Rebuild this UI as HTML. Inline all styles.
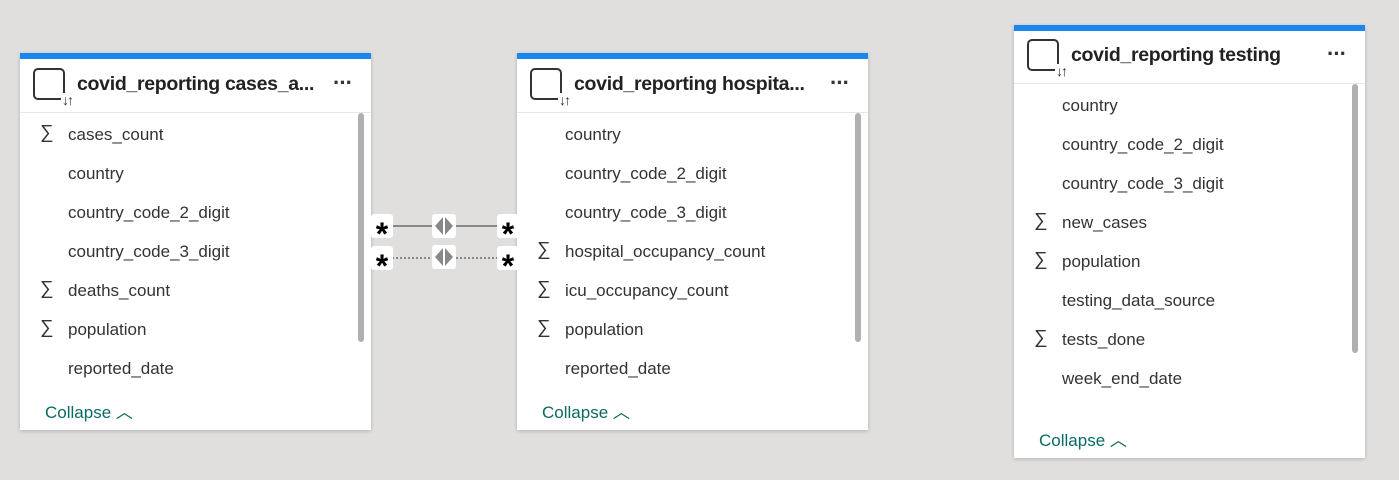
<!DOCTYPE html><html><head><style>
body{margin:0;width:1399px;height:480px;background:#e0dfdd;font-family:"Liberation Sans",sans-serif;position:relative;overflow:hidden}
.card{position:absolute;width:351px;background:#fff;border-top:6px solid #1a86f0;box-shadow:0 1px 4px rgba(0,0,0,.2)}
.hd{height:53px;border-bottom:1px solid #e6e6e6;position:relative}
.ic{position:absolute;left:13px;top:9px;width:28px;height:28px;border:2px solid #333;border-radius:5px}
.ic:after{content:"↓↑";position:absolute;right:-9px;bottom:-9px;background:#fff;font-size:14px;font-weight:bold;color:#333;line-height:14px;letter-spacing:-2px;padding-left:1px}
.tt{position:absolute;left:57px;top:14px;font-size:19.5px;font-weight:bold;color:#222;letter-spacing:-.3px}
.dots{position:absolute;right:19px;top:11px;font-size:22px;font-weight:bold;color:#333;letter-spacing:-1px}
.row{position:absolute;left:48px;font-size:17px;color:#333}
.sig{position:absolute;left:-28px;font-size:19px;top:-3px}
.col{position:absolute;left:25px;font-size:17px;color:#0b6a63}
.sb{position:absolute;right:7px;width:6px;background:#b0b0b0;border-radius:3px}
.star{position:absolute;width:22px;height:24px;background:#fff;border-radius:3px;font-size:32px;text-align:center;line-height:40px;font-weight:bold}
.dia{position:absolute;width:24px;height:24px;background:#fff;border-radius:3px}
</style></head><body>
<div class="card" style="left:20px;top:53px;height:371px">
<div class="hd"><div class="ic"></div><div class="tt">covid_reporting cases_a...</div><div class="dots">···</div></div>
<div class="sb" style="top:54px;height:229px"></div>
<div class="row" style="top:66px"><span class="sig">∑</span>cases_count</div>
<div class="row" style="top:105px">country</div>
<div class="row" style="top:144px">country_code_2_digit</div>
<div class="row" style="top:183px">country_code_3_digit</div>
<div class="row" style="top:222px"><span class="sig">∑</span>deaths_count</div>
<div class="row" style="top:261px"><span class="sig">∑</span>population</div>
<div class="row" style="top:300px">reported_date</div>
<div class="col" style="top:339px">Collapse ︿</div>
</div>
<div class="card" style="left:517px;top:53px;height:371px">
<div class="hd"><div class="ic"></div><div class="tt">covid_reporting hospita...</div><div class="dots">···</div></div>
<div class="sb" style="top:54px;height:229px"></div>
<div class="row" style="top:66px">country</div>
<div class="row" style="top:105px">country_code_2_digit</div>
<div class="row" style="top:144px">country_code_3_digit</div>
<div class="row" style="top:183px"><span class="sig">∑</span>hospital_occupancy_count</div>
<div class="row" style="top:222px"><span class="sig">∑</span>icu_occupancy_count</div>
<div class="row" style="top:261px"><span class="sig">∑</span>population</div>
<div class="row" style="top:300px">reported_date</div>
<div class="col" style="top:339px">Collapse ︿</div>
</div>
<div class="card" style="left:1014px;top:25px;height:427px">
<div class="hd" style="height:52px"><div class="ic" style="top:8px"></div><div class="tt" style="top:13px">covid_reporting testing</div><div class="dots" style="top:10px">···</div></div>
<div class="sb" style="top:53px;height:269px"></div>
<div class="row" style="top:65px">country</div>
<div class="row" style="top:104px">country_code_2_digit</div>
<div class="row" style="top:143px">country_code_3_digit</div>
<div class="row" style="top:182px"><span class="sig">∑</span>new_cases</div>
<div class="row" style="top:221px"><span class="sig">∑</span>population</div>
<div class="row" style="top:260px">testing_data_source</div>
<div class="row" style="top:299px"><span class="sig">∑</span>tests_done</div>
<div class="row" style="top:338px">week_end_date</div>
<div class="col" style="top:395px">Collapse ︿</div>
</div>
<div style="position:absolute;left:392px;top:225px;width:106px;border-top:2px solid #888"></div>
<div style="position:absolute;left:392px;top:257px;width:106px;border-top:2px dotted #888"></div>
<div class="star" style="left:371px;top:214px">*</div>
<div class="star" style="left:371px;top:246px">*</div>
<div class="star" style="left:497px;top:214px">*</div>
<div class="star" style="left:497px;top:246px">*</div>
<svg class="dia" style="left:432px;top:214px" viewBox="0 0 24 24"><path d="M11 3L3 12L11 21ZM13 3L21 12L13 21Z" fill="#888"/></svg>
<svg class="dia" style="left:432px;top:245px" viewBox="0 0 24 24"><path d="M11 3L3 12L11 21ZM13 3L21 12L13 21Z" fill="#888"/></svg>
</body></html>
